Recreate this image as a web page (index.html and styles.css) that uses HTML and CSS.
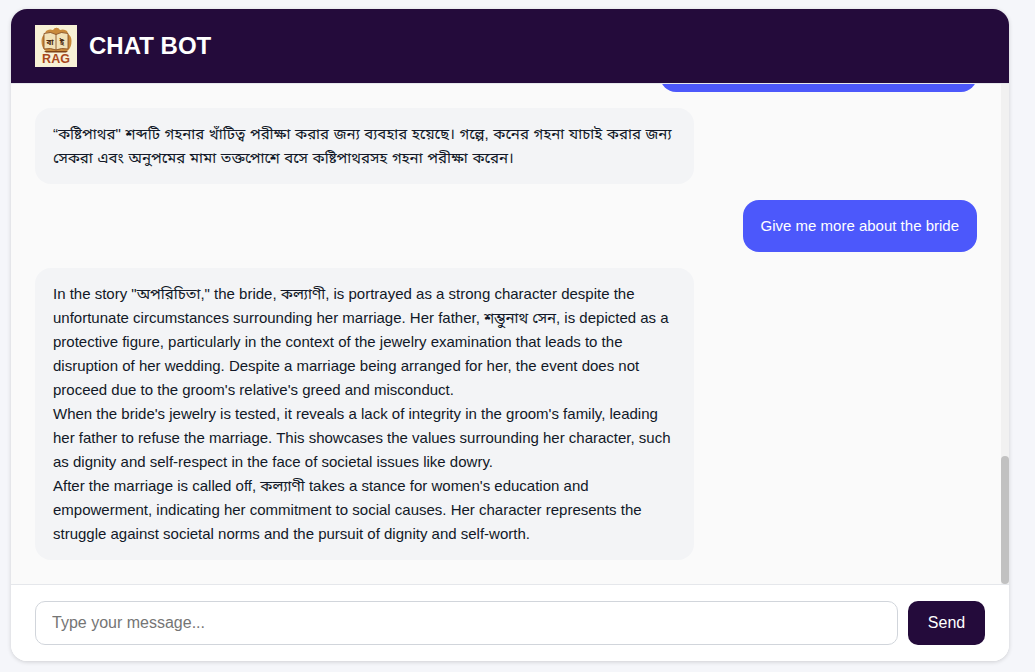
FILE: index.html
```html
<!DOCTYPE html>
<html lang="en">
<head>
<meta charset="utf-8">
<title>Chat Bot</title>
<link rel="stylesheet" href="styles.css">
</head>
<body>
<main class="chat">
  <header class="chat-header">
    <svg class="logo" viewBox="0 0 42 42" role="img" aria-label="RAG logo">
      <rect width="42" height="42" fill="#f8f1d6"/>
      <path d="M21 2.500 q3 0 4 2.500 q4 -1.500 7 1 q1 2 1 3 q3.500 2 3.500 7 q0 6 -3 9 q-2 2 -5 2 H14.500 q-3 0 -5 -2 q-3 -3 -3 -9 q0 -5 3.500 -7 q0 -1 1 -3 q3 -2.500 7 -1 q1 -2.500 4 -2.500z" fill="#c98a3c"/>
      <path d="M9 26 h24 l-2 1.500 H11z" fill="#7d4216"/>
      <path d="M9 8.500 q7 -2.500 12 1 q5 -3.500 12 -1 v15.500 q-7 -1.500 -12 1 q-5 -2.500 -12 -1z" fill="#f2e2b8" stroke="#7d4216" stroke-width="0.8"/>
      <path d="M21 9.500 v15.500" stroke="#7d4216" stroke-width="0.8"/>
      <text class="logo-bn" x="15" y="19.500">বা</text>
      <text class="logo-bn" x="27" y="19.500">ই</text>
      <text class="logo-rag" x="21" y="37.500">RAG</text>
    </svg>
    <h1 class="chat-title">CHAT BOT</h1>
  </header>
  <section class="pane">
    <div class="messages">
      <div class="bubble user earlier"></div>
      <div class="bubble bot bengali">“কষ্টিপাথর" শব্দটি গহনার খাঁটিত্ব পরীক্ষা করার জন্য ব্যবহার হয়েছে। গল্পে, কনের গহনা যাচাই করার জন্য সেকরা এবং অনুপমের মামা তক্তপোশে বসে কষ্টিপাথরসহ গহনা পরীক্ষা করেন।</div>
      <div class="bubble user">Give me more about the bride</div>
      <div class="bubble bot">In the story "অপরিচিতা," the bride, কল্যাণী, is portrayed as a strong character despite the unfortunate circumstances surrounding her marriage. Her father, শম্ভুনাথ সেন, is depicted as a protective figure, particularly in the context of the jewelry examination that leads to the disruption of her wedding. Despite a marriage being arranged for her, the event does not proceed due to the groom's relative's greed and misconduct.<br>When the bride's jewelry is tested, it reveals a lack of integrity in the groom's family, leading her father to refuse the marriage. This showcases the values surrounding her character, such as dignity and self-respect in the face of societal issues like dowry.<br>After the marriage is called off, কল্যাণী takes a stance for women's education and empowerment, indicating her commitment to social causes. Her character represents the struggle against societal norms and the pursuit of dignity and self-worth.</div>
    </div>
    <div class="scrollbar"><div class="scrollbar-thumb"></div></div>
  </section>
  <form class="composer">
    <input class="composer-input" type="text" placeholder="Type your message...">
    <button class="composer-send" type="button">Send</button>
  </form>
</main>
</body>
</html>
```
FILE: styles.css
```css
* { box-sizing: border-box; }
html, body { height: 100%; }
body {
  margin: 0;
  padding: 9px 26px 11px 11px;
  background: #f5f6fa;
  font-family: "Liberation Sans", "Noto Sans Bengali", Arial, sans-serif;
  color: #111827;
}
.chat {
  height: 100%;
  display: flex;
  flex-direction: column;
  background: #fff;
  border-radius: 16px;
  overflow: hidden;
  box-shadow: 0 1px 4px rgba(0, 0, 0, 0.16);
}
.chat-header {
  flex: none;
  display: flex;
  align-items: center;
  gap: 12px;
  height: 75px;
  margin-bottom: -1px;
  padding: 0 24px 1px;
  background: #240b3b;
  border-bottom: 1px solid #e5e7eb;
  position: relative;
  z-index: 1;
}
.logo { width: 42px; height: 42px; flex: none; display: block; }
.logo-bn { font: 700 8px "Noto Sans Bengali", sans-serif; fill: #4b2a10; text-anchor: middle; }
.logo-rag { font: 700 12.5px "Liberation Sans", sans-serif; fill: #a8481c; text-anchor: middle; }
.chat-title {
  margin: 0;
  font-size: 24px;
  line-height: 28px;
  font-weight: 700;
  color: #fff;
}
.pane {
  flex: 1;
  min-height: 0;
  position: relative;
}
.messages {
  height: 100%;
  overflow: hidden;
  display: flex;
  flex-direction: column;
  justify-content: flex-end;
  gap: 16px;
  padding: 24px 32px 24px 24px;
  background: #fafafa;
}
.scrollbar {
  position: absolute;
  top: 0;
  right: 0;
  bottom: 0;
  width: 8px;
  background: #f1f1f1;
}
.scrollbar-thumb {
  position: absolute;
  left: 0;
  right: 0;
  bottom: 0;
  height: 128px;
  background: #c1c1c1;
  border-radius: 4px;
}
.bubble {
  flex: none;
  max-width: 70%;
  padding: 14px 18px;
  border-radius: 16px;
  font-size: 15px;
  line-height: 24px;
}
.bubble.bot { align-self: flex-start; background: #f3f4f6; color: #111827; }
.bubble.user { align-self: flex-end; background: #4c58fb; color: #fff; }
.bubble.earlier { width: 317px; height: 76px; }
.bubble.bengali { word-spacing: 0.45px; }
.composer {
  flex: none;
  display: flex;
  gap: 10px;
  padding: 16px 24px;
  background: #fff;
  border-top: 1px solid #e5e7eb;
}
.composer-input {
  flex: 1;
  min-width: 0;
  height: 44px;
  padding: 0 16px;
  border: 1px solid #d1d5db;
  border-radius: 10px;
  font: 16px "Liberation Sans", Arial, sans-serif;
  color: #111827;
  background: #fff;
  outline: none;
}
.composer-send {
  flex: none;
  width: 77px;
  height: 44px;
  border: 0;
  border-radius: 10px;
  background: #240b3b;
  color: #fff;
  font: 16px "Liberation Sans", Arial, sans-serif;
}
```
